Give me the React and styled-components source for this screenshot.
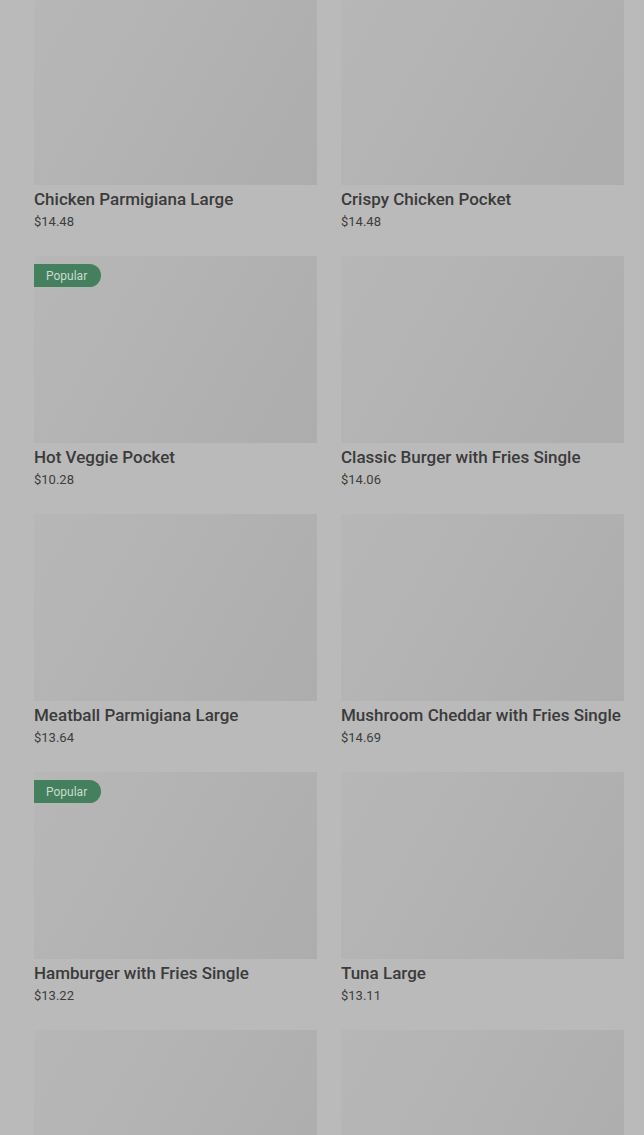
import React from 'react';
import styled, { createGlobalStyle } from 'styled-components';

const GlobalStyle = createGlobalStyle`
  html, body {
    margin: 0;
    padding: 0;
    background: #bababa;
    overflow: hidden;
  }
  body {
    font-family: Roboto, "Liberation Sans", sans-serif;
  }
`;

const Page = styled.div`
  height: 1135px;
  overflow: hidden;
  background: #bababa;
  padding: 0 20px 0 34px;
`;

const Grid = styled.div`
  display: grid;
  grid-template-columns: 283px 283px;
  column-gap: 24px;
  row-gap: 24px;
  margin-top: -2px;
`;

const Card = styled.div`
  display: flex;
  flex-direction: column;
`;

const Thumb = styled.div`
  position: relative;
  height: 187px;
  background: linear-gradient(120deg, #b7b7b7 0%, #b2b2b2 50%, #adadad 100%);
`;

const Badge = styled.span`
  position: absolute;
  top: 8px;
  left: 0;
  height: 23px;
  padding: 0 14px 0 12px;
  display: flex;
  align-items: center;
  background: #447f5e;
  color: #c9dccf;
  font-size: 12px;
  border-radius: 0 12px 12px 0;
`;

const Name = styled.div`
  margin-top: 3px;
  font-size: 17px;
  line-height: 22px;
  font-weight: 500;
  color: #3b3b3b;
  white-space: nowrap;
`;

const Price = styled.div`
  margin-top: 2px;
  font-size: 13px;
  line-height: 20px;
  color: #3d3d3d;
`;

const items = [
  { name: 'Chicken Parmigiana Large', price: '$14.48' },
  { name: 'Crispy Chicken Pocket', price: '$14.48' },
  { name: 'Hot Veggie Pocket', price: '$10.28', popular: true },
  { name: 'Classic Burger with Fries Single', price: '$14.06' },
  { name: 'Meatball Parmigiana Large', price: '$13.64' },
  { name: 'Mushroom Cheddar with Fries Single', price: '$14.69' },
  { name: 'Hamburger with Fries Single', price: '$13.22', popular: true },
  { name: 'Tuna Large', price: '$13.11' },
  { name: '', price: '' },
  { name: '', price: '' },
];

export default function App() {
  return (
    <Page>
      <GlobalStyle />
      <Grid>
        {items.map((item, i) => (
          <Card key={i}>
            <Thumb>{item.popular && <Badge>Popular</Badge>}</Thumb>
            <Name>{item.name}</Name>
            <Price>{item.price}</Price>
          </Card>
        ))}
      </Grid>
    </Page>
  );
}
